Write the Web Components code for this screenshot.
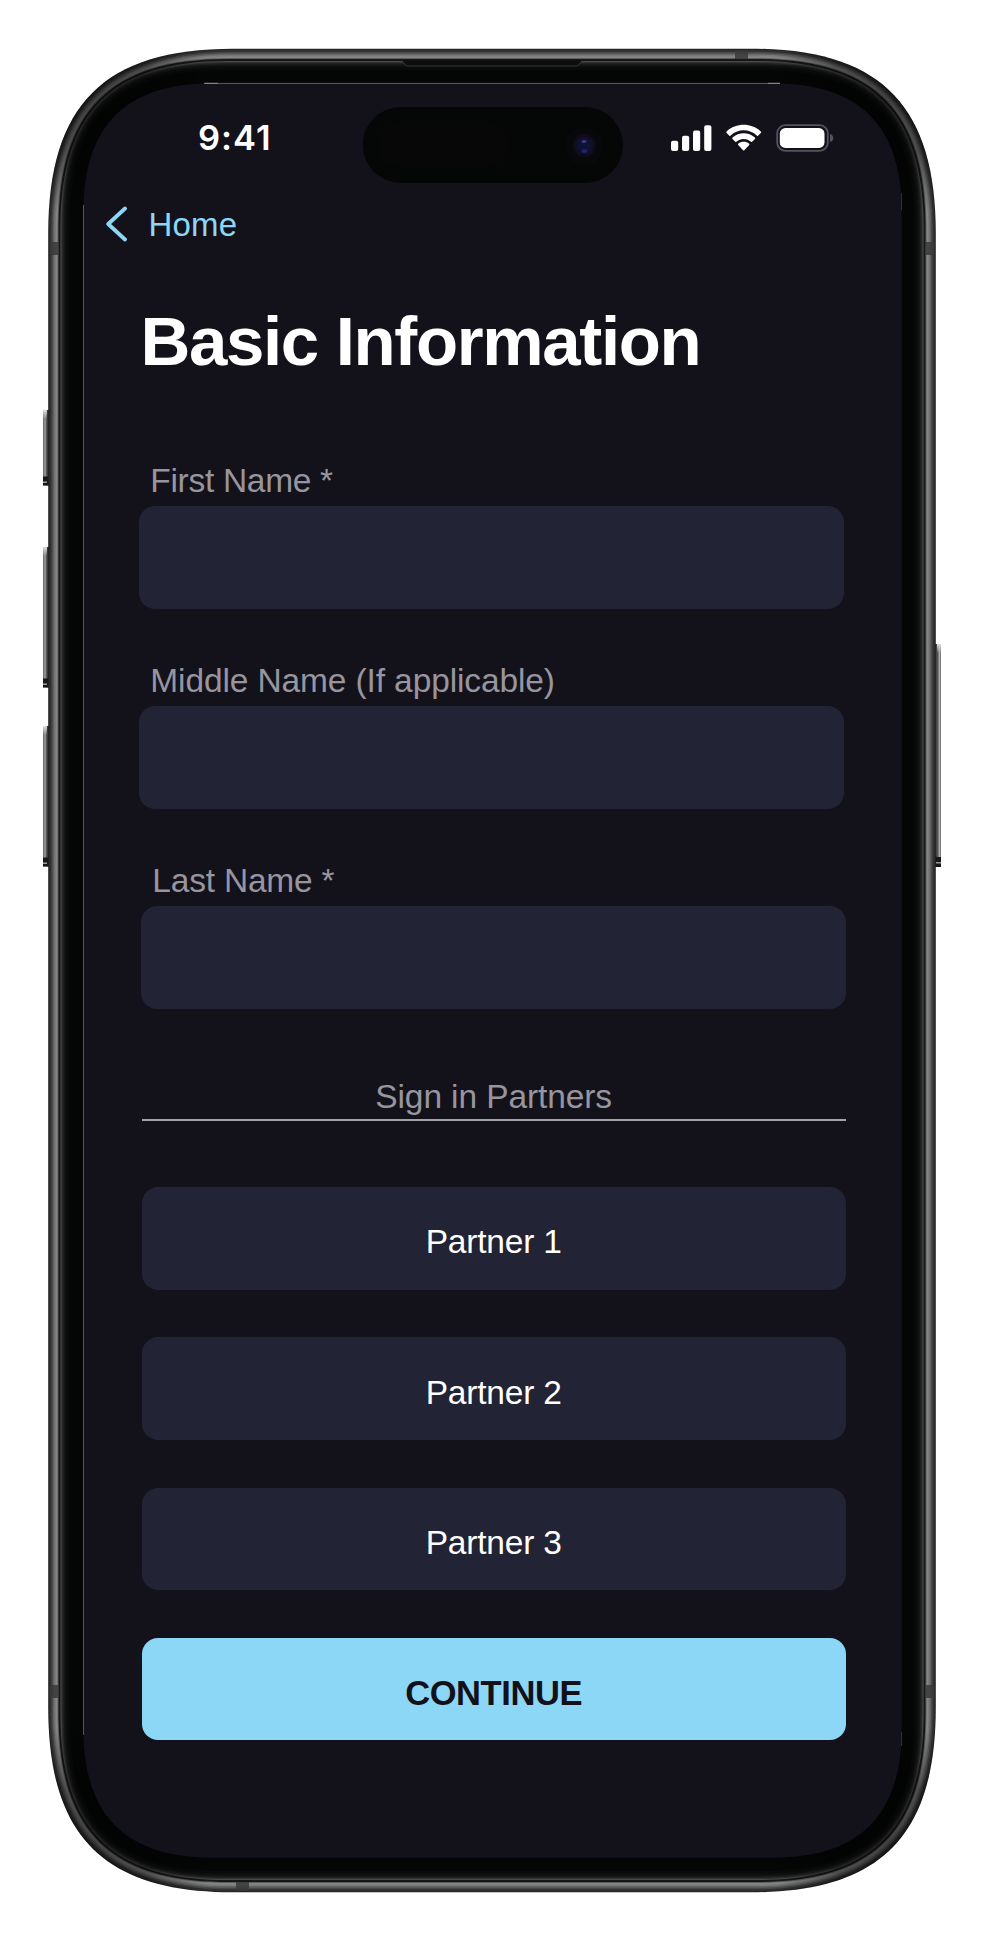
<!DOCTYPE html>
<html lang="en"><head><meta charset="utf-8"><title>Basic Information</title>
<style>html,body{margin:0;background:#fff;font-family:"Liberation Sans",Arial,sans-serif}</style></head>
<body>
<phone-frame>
  <status-bar></status-bar>
  <back-link>Home</back-link>
  <page-title>Basic Information</page-title>
  <form-fields>
    <text-field label="First Name *" style="--ls:-.3px"></text-field>
    <text-field label="Middle Name (If applicable)" style="--ls:-.12px"></text-field>
    <text-field label="Last Name *" style="--shift:2px"></text-field>
  </form-fields>
  <section-rule>Sign in Partners</section-rule>
  <button-stack>
    <action-button>Partner 1</action-button>
    <action-button>Partner 2</action-button>
    <action-button>Partner 3</action-button>
    <action-button primary>CONTINUE</action-button>
  </button-stack>
</phone-frame>
<script>
const define=(name,html)=>customElements.define(name,class extends HTMLElement{
  constructor(){super();this.attachShadow({mode:'open'}).innerHTML=typeof html==='function'?html(this):html}
});

// Continuous-corner rectangle: l is the corner length, c the control distance.
function squircle(x,y,r,b,l,c){
  return `M${x} ${y+l}C${x} ${y+c} ${x+c} ${y} ${x+l} ${y}H${r-l}C${r-c} ${y} ${r} ${y+c} ${r} ${y+l}V${b-l}C${r} ${b-c} ${r-c} ${b} ${r-l} ${b}H${x+l}C${x+c} ${b} ${x} ${b-c} ${x} ${b-l}Z`;
}
const ring=(d)=>squircle(48.2+d,48.7+d,935.8-d,1892.3-d,185-d*1.5,56-d*.4);
const shades=[[0,'#222'],[1,'#303030'],[3,'#464646'],[4.5,'#606060'],[6,'#777'],[7.5,'#858585'],[9.3,'#5c5c5c'],[10.3,'#161616'],[11.3,'#161817'],[12.2,'#474948'],[13.2,'#303231'],[14.3,'#202221'],[15.5,'#151716'],[17,'#0d0f0e'],[19,'#080a09'],[21.5,'#040505']];
const corner=[[95,100],[889,100],[95,1841],[889,1841]];
const leftBtn=(y,h)=>`<rect x="43" y="${y}" width="6" height="${h}" fill="url(#lb)"/><rect x="43" y="${y}" width="4" height="9" fill="url(#cap)"/><rect x="43" y="${y+h-9}" width="6" height="9" fill="#181818"/><rect x="43" y="${y+h-4}" width="4" height="1.4" fill="#aaa"/>`;
define('phone-frame',()=>`<style>
:host{display:block;position:relative;width:985px;height:1942px;overflow:hidden}
svg{position:absolute;inset:0}
main{position:relative;box-sizing:border-box;width:985px;height:1942px;padding:83px 83px 84px 83px;display:flex;flex-direction:column}
</style>
<svg width="985" height="1942" viewBox="0 0 985 1942"><defs>
<linearGradient id="lb"><stop offset="0" stop-color="#626262"/><stop offset=".35" stop-color="#a0a0a0"/><stop offset=".65" stop-color="#444"/><stop offset="1" stop-color="#222"/></linearGradient>
<linearGradient id="rb"><stop offset="0" stop-color="#333"/><stop offset=".45" stop-color="#555"/><stop offset=".75" stop-color="#aaa"/><stop offset="1" stop-color="#666"/></linearGradient>
<linearGradient id="cap" x2="0" y2="1"><stop stop-color="#ddd"/><stop offset="1" stop-color="#ddd" stop-opacity="0"/></linearGradient>
<radialGradient id="dim"><stop stop-color="#000" stop-opacity=".5"/><stop offset=".5" stop-color="#000" stop-opacity=".4"/><stop offset="1" stop-color="#000" stop-opacity="0"/></radialGradient>
<radialGradient id="lens"><stop stop-color="#0e1238"/><stop offset=".45" stop-color="#101136"/><stop offset=".75" stop-color="#0e0e20"/><stop offset="1" stop-color="#0a090d"/></radialGradient>
<clipPath id="body"><path d="${ring(0)}"/></clipPath></defs>
${leftBtn(410,75.5)}${leftBtn(547,140.5)}${leftBtn(726,140.5)}
<rect x="935" y="644" width="6" height="223" fill="url(#rb)"/><rect x="937" y="644" width="4" height="9" fill="url(#cap)"/><rect x="935" y="857" width="6" height="10" fill="#181818"/><rect x="936" y="862" width="5" height="1.5" fill="#999"/>
${shades.map(([d,f])=>`<path d="${ring(d)}" fill="${f}"/>`).join('')}
<g clip-path="url(#body)">${corner.map(([x,y])=>`<circle cx="${x}" cy="${y}" r="120" fill="url(#dim)"/>`).join('')}
<g fill="#393939" opacity=".85"><rect x="735" y="50.5" width="13" height="8.5"/><rect x="50" y="242" width="8.5" height="13"/><rect x="925.5" y="242" width="8.5" height="13"/><rect x="50" y="1685" width="8.5" height="13"/><rect x="925.5" y="1685" width="8.5" height="13"/><rect x="236" y="1882" width="13" height="8.5"/></g></g>
<path d="M401 60.5L403 61.5L407 66H577L581 61.5L583 60.5Z" fill="#0c0e0d"/><path d="M402 61.5L407 66H577L582 61.5" fill="none" stroke="#333534"/>
<path d="${squircle(83.3,83.2,901.8,1857.8,130,42)}" fill="#13111a"/>
<path d="M205 83.4H780" stroke="#5d5c62" stroke-width="1"/><path d="M204 83.3h14M768 83.3h12" stroke="#aaa" stroke-width=".7"/>
<path d="M83.5 205V1735" stroke="#55545a" stroke-width="1"/><path d="M901.6 193v17M901.6 1732v14" stroke="#444" stroke-width=".7"/>
<rect x="362.7" y="107" width="260.3" height="76" rx="38" fill="#050606"/><rect x="378" y="121" width="130" height="47" rx="23" fill="#060706"/>
<circle cx="584" cy="146.5" r="19" fill="#08080a"/><circle cx="584.3" cy="145.5" r="12" fill="url(#lens)"/><ellipse cx="584" cy="141.5" rx="2.5" ry="1.4" fill="#3d3c88"/><ellipse cx="584.5" cy="151" rx="3" ry="1.8" fill="#222270"/>
</svg><main><slot></slot></main>`);

define('status-bar',`<style>
:host{display:flex;align-items:center;box-sizing:border-box;height:109px;padding:0 0 0 115px;color:#fff}
time{font:600 34.5px/40px Inter,sans-serif;letter-spacing:1px;width:472px}
svg{display:block}
</style><time>9:41</time>
<svg width="166" height="32" viewBox="670 121.5 166 32" fill="#fff">
<rect x="671" y="140.3" width="7.2" height="10.2" rx="2"/><rect x="682" y="135.2" width="7.2" height="15.3" rx="2"/><rect x="693" y="130" width="7.2" height="20.5" rx="2"/><rect x="704.2" y="124.8" width="7.2" height="25.7" rx="2"/>
<g><path d="M743.7 129.8c5 0 9.7 2 13.3 5.4.3.3.7.3 1 0l2.8-2.7c.5-.5.5-1 0-1.5-9.6-8.9-24.6-8.9-34.2 0-.5.5-.5 1 0 1.5l2.8 2.7c.3.3.7.3 1 0 3.6-3.4 8.3-5.4 13.3-5.4Z"/><path d="M743.7 138.4c2.8 0 5.4 1 7.4 2.9.3.3.7.3 1 0l2.8-2.8c.4-.4.4-1 0-1.4-6.3-5.8-16.1-5.8-22.4 0-.4.4-.4 1 0 1.4l2.8 2.8c.3.3.7.3 1 0 2-1.9 4.6-2.9 7.4-2.9Z"/><path d="M749.2 144.6c.3-.3.3-1 0-1.3-3.1-2.6-7.9-2.6-11 0-.3.3-.3 1 0 1.3l4.9 5.1c.4.4.8.4 1.2 0Z"/></g>
<rect x="777.2" y="124.7" width="50.6" height="25.6" rx="8" fill="none" stroke="#55535b" stroke-width="1.8"/><rect x="779.8" y="127.6" width="44.7" height="19.8" rx="5.5"/><path d="M830 133.5c2 .5 3.3 2.2 3.3 4s-1.3 3.5-3.3 4Z" fill="#55535b"/>
</svg>`);

define('back-link',`<style>
:host{display:flex;align-items:center;gap:21.5px;height:66px;padding-left:22px;color:#8cd7f6;font-size:33px;line-height:40px;letter-spacing:.2px}
svg{display:block;margin-top:-3px}
</style><svg width="22" height="36" viewBox="0 0 22 36" fill="none" stroke="currentColor" stroke-width="3.8" stroke-linecap="round" stroke-linejoin="round"><path d="M20 2.5L3.2 18L20 33.5"/></svg><slot></slot>`);

define('page-title',`<style>
:host{display:block;box-sizing:border-box;height:208px;padding:44px 0 0 57.5px;color:#fff;font-weight:700;font-size:69px;line-height:80px;letter-spacing:-1.35px;white-space:nowrap}
</style><slot></slot>`);

define('form-fields',`<style>:host{display:flex;flex:none;flex-direction:column;height:543px}</style><slot></slot>`);

define('text-field',el=>`<style>
:host{display:block;flex:none;width:704.5px;height:200px;margin-left:calc(56.3px + var(--shift,0px))}
label{display:block;box-sizing:border-box;height:40.3px;line-height:27px;padding:.7px 0 0 11px;font-size:33.5px;letter-spacing:var(--ls,-.2px);color:#97959f;white-space:nowrap}
input{display:block;box-sizing:border-box;width:100%;height:102.5px;border:0;border-radius:16px;background:#222335;padding:0 20px;color:#fff;font:inherit;outline:0}
</style><label for="field">${el.getAttribute('label')}</label><input id="field" type="text">`);

define('section-rule',`<style>
:host{display:block;flex:none;box-sizing:border-box;width:704.3px;height:48px;margin:64px 0 66px 58.5px;border-bottom:2px solid #a3a1aa;text-align:center;color:#97959f;font-size:33.5px;line-height:48px;letter-spacing:-.1px}
</style><slot></slot>`);

define('button-stack',`<style>:host{display:grid;flex:none;gap:47.8px;width:704.3px;margin-left:58.5px}</style><slot></slot>`);

define('action-button',`<style>
:host{display:block}
button{display:block;width:100%;height:102.5px;border:0;border-radius:16px;padding:8px 0 0;background:#222335;color:#fff;font:33.5px "Liberation Sans",Arial,sans-serif;letter-spacing:-.2px}
:host([primary]) button{background:#8cd7f6;color:#121019;font-weight:700;font-size:34.5px;letter-spacing:-.4px}
</style><button type="button"><slot></slot></button>`);
</script></body></html>
